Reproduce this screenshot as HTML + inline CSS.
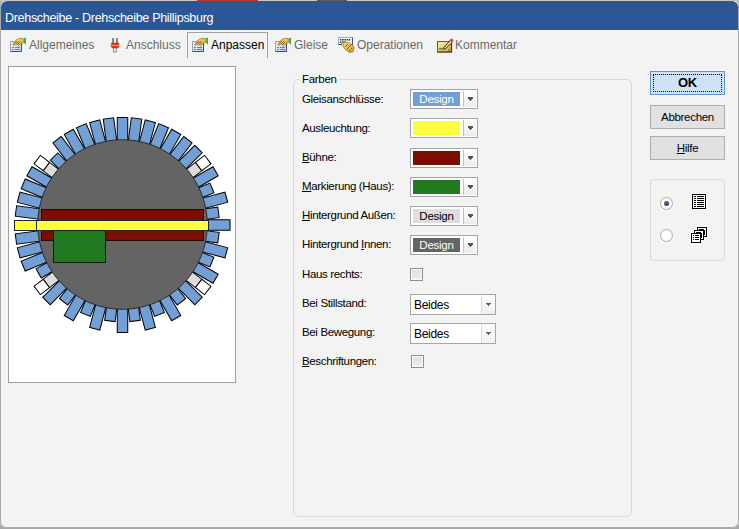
<!DOCTYPE html>
<html><head><meta charset="utf-8">
<style>
html,body{margin:0;padding:0;}
body{width:739px;height:529px;overflow:hidden;position:relative;background:#a8a8a8;font-family:"Liberation Sans",sans-serif;}
.abs{position:absolute;}
#win{position:absolute;left:0;top:0;width:739px;height:528px;background:#f3f3f3;border-radius:6px;}
#frame{position:absolute;left:0;top:0;width:737px;height:527px;border:1px solid #a9a9a9;border-top:none;border-radius:6px;pointer-events:none;}
#title{position:absolute;left:1px;top:1px;width:737px;height:29px;background:#2b5797;border-radius:6px 6px 0 0;}
#title span{position:absolute;left:4px;top:10px;font-size:12.5px;letter-spacing:-0.3px;color:#fff;white-space:nowrap;line-height:14px;}
.tab{position:absolute;top:0;height:24px;font-size:12px;color:#6a6a6a;white-space:nowrap;}
.lbl{position:absolute;left:302px;font-size:11.5px;letter-spacing:-0.35px;color:#000;white-space:nowrap;}
.dd{position:absolute;left:410px;width:66px;height:18px;border:1px solid #a3a4a9;background:#fff;}
.dd .sw{position:absolute;left:2px;top:2px;width:47px;height:14px;}
.dd .sep{position:absolute;left:52px;top:1px;width:1px;height:16px;background:#bfc3c9;}
.dd .arr{position:absolute;left:53px;top:1px;width:12px;height:16px;background:linear-gradient(#fff,#ececec);}
.dd .arr:after{content:"";position:absolute;left:4px;top:6px;width:5px;height:4px;background:linear-gradient(#555,#555) 0 0/5px 2px no-repeat,linear-gradient(#555,#555) 1px 2px/3px 1px no-repeat,linear-gradient(#555,#555) 2px 3px/1px 1px no-repeat;}
.sw span{position:absolute;left:0;right:0;top:1px;text-align:center;font-size:11.5px;letter-spacing:-0.25px;}
.cb{position:absolute;left:410px;width:11px;height:11px;border:1px solid #8e8e8e;background:linear-gradient(#dedede,#eeeeee);box-shadow:inset 0 0 0 1px #fafafa;}
.combo{position:absolute;left:410px;width:84px;height:19px;border:1px solid #a5a5a5;background:#fff;}
.combo span{position:absolute;left:3px;top:3px;font-size:12px;letter-spacing:-0.3px;color:#000;}
.combo .sep{position:absolute;left:70px;top:0;width:1px;height:19px;background:#dcdcdc;}
.combo .arr{position:absolute;left:71px;top:0;width:13px;height:19px;background:linear-gradient(#fff,#f0f0f0);}
.combo .arr:after{content:"";position:absolute;left:4px;top:8px;width:5px;height:3px;background:linear-gradient(#606060,#606060) 0 0/5px 1px no-repeat,linear-gradient(#606060,#606060) 1px 1px/3px 1px no-repeat,linear-gradient(#606060,#606060) 2px 2px/1px 1px no-repeat;}
.btn{position:absolute;left:650px;width:73px;height:22px;border:1px solid #adadad;background:#e1e1e1;font-size:11.5px;letter-spacing:-0.3px;text-align:center;line-height:22px;color:#000;}
u{text-decoration:underline;}
</style></head><body>

<svg width="0" height="0" style="position:absolute">
<defs>
<linearGradient id="cardg" x1="0" y1="0" x2="1" y2="1"><stop offset="0" stop-color="#f4f8fd"/><stop offset="1" stop-color="#bcd0ea"/></linearGradient>
<linearGradient id="goldg" x1="0" y1="0" x2="1" y2="1"><stop offset="0" stop-color="#fbe58a"/><stop offset="1" stop-color="#d49a1c"/></linearGradient>
<linearGradient id="padg" x1="0" y1="0" x2="1" y2="1"><stop offset="0" stop-color="#fff6a8"/><stop offset="1" stop-color="#c9a23a"/></linearGradient>
</defs></svg>
<div id="win">
 <div id="title"><span>Drehscheibe - Drehscheibe Phillipsburg</span></div>

 <!-- tabs -->
 <div class="abs" style="left:187px;top:32px;width:79px;height:25px;border:1px solid #a0a0a0;border-bottom:none;background:#f3f3f3;"></div>
 <div class="tab" style="left:29px;top:38px;">Allgemeines</div>
 <div class="tab" style="left:126px;top:38px;">Anschluss</div>
 <div class="tab" style="left:211px;top:38px;color:#000;">Anpassen</div>
 <div class="tab" style="left:294px;top:38px;">Gleise</div>
 <div class="tab" style="left:357px;top:38px;">Operationen</div>
 <div class="tab" style="left:455px;top:38px;">Kommentar</div>


 <svg class="abs" style="left:8px;top:34px" width="20" height="20" viewBox="0 0 20 20">
 <rect x="2.5" y="7.5" width="11" height="10" fill="url(#cardg)" stroke="#8ea3c2"/>
 <path d="M2.5 17.5 H13.5 V7.5" fill="none" stroke="#3d4f70"/>
 <rect x="4" y="13" width="2" height="1" fill="#6f7f99"/><rect x="7" y="13" width="5" height="1" fill="#6f7f99"/>
 <rect x="4" y="15" width="2" height="1" fill="#6f7f99"/><rect x="7" y="15" width="5" height="1" fill="#6f7f99"/>
 <path d="M4.5 10.5 L8 6 L11 4.5 L15 4.3 L16.3 6.5 L15 9 L12.5 10 L10.5 11.8 L8.5 10 L6 11.5 Z" fill="url(#goldg)" stroke="#8c6a1e" stroke-width="0.6"/>
 <g fill="#7a5a14" opacity="0.75"><rect x="6" y="9" width="1" height="1"/><rect x="8" y="7" width="1" height="1"/><rect x="8" y="9" width="1" height="1"/><rect x="10" y="7" width="1" height="1"/><rect x="10" y="9" width="1" height="1"/><rect x="9" y="8" width="1" height="1"/><rect x="7" y="8" width="1" height="1"/><rect x="11" y="8" width="1" height="1"/><rect x="9" y="10" width="1" height="1"/></g>
 <path d="M15.8 4 L18 3.8 L18 11 L16 8.5 Z" fill="#55a455"/>
</svg>
 <svg class="abs" style="left:104px;top:34px" width="20" height="20" viewBox="0 0 20 20">
 <rect x="8.3" y="4" width="1.6" height="5" fill="#6b6b6b"/><rect x="12.1" y="4" width="1.6" height="5" fill="#6b6b6b"/>
 <path d="M7.3 9 H14.8 V13 L13.5 14 H8.5 L7.3 13 Z" fill="#ee3a0c" stroke="#a02808" stroke-width="0.5"/>
 <rect x="7.5" y="11" width="7" height="0.8" fill="#ffb090"/>
 <rect x="9.5" y="14" width="3" height="4" fill="#d8eef6" stroke="#555" stroke-width="0.6"/>
</svg>
 <svg class="abs" style="left:190px;top:34px" width="20" height="20" viewBox="0 0 20 20">
 <rect x="2.5" y="7.5" width="11" height="10" fill="url(#cardg)" stroke="#8ea3c2"/>
 <path d="M2.5 17.5 H13.5 V7.5" fill="none" stroke="#3d4f70"/>
 <rect x="4" y="13" width="2" height="1" fill="#6f7f99"/><rect x="7" y="13" width="5" height="1" fill="#6f7f99"/>
 <rect x="4" y="15" width="2" height="1" fill="#6f7f99"/><rect x="7" y="15" width="5" height="1" fill="#6f7f99"/>
 <path d="M4.5 10.5 L8 6 L11 4.5 L15 4.3 L16.3 6.5 L15 9 L12.5 10 L10.5 11.8 L8.5 10 L6 11.5 Z" fill="url(#goldg)" stroke="#8c6a1e" stroke-width="0.6"/>
 <g fill="#7a5a14" opacity="0.75"><rect x="6" y="9" width="1" height="1"/><rect x="8" y="7" width="1" height="1"/><rect x="8" y="9" width="1" height="1"/><rect x="10" y="7" width="1" height="1"/><rect x="10" y="9" width="1" height="1"/><rect x="9" y="8" width="1" height="1"/><rect x="7" y="8" width="1" height="1"/><rect x="11" y="8" width="1" height="1"/><rect x="9" y="10" width="1" height="1"/></g>
 <path d="M15.8 4 L18 3.8 L18 11 L16 8.5 Z" fill="#55a455"/>
</svg>
 <svg class="abs" style="left:273px;top:34px" width="20" height="20" viewBox="0 0 20 20">
 <rect x="2.5" y="7.5" width="11" height="10" fill="url(#cardg)" stroke="#8ea3c2"/>
 <path d="M2.5 17.5 H13.5 V7.5" fill="none" stroke="#3d4f70"/>
 <rect x="4" y="13" width="2" height="1" fill="#6f7f99"/><rect x="7" y="13" width="5" height="1" fill="#6f7f99"/>
 <rect x="4" y="15" width="2" height="1" fill="#6f7f99"/><rect x="7" y="15" width="5" height="1" fill="#6f7f99"/>
 <path d="M4.5 10.5 L8 6 L11 4.5 L15 4.3 L16.3 6.5 L15 9 L12.5 10 L10.5 11.8 L8.5 10 L6 11.5 Z" fill="url(#goldg)" stroke="#8c6a1e" stroke-width="0.6"/>
 <g fill="#7a5a14" opacity="0.75"><rect x="6" y="9" width="1" height="1"/><rect x="8" y="7" width="1" height="1"/><rect x="8" y="9" width="1" height="1"/><rect x="10" y="7" width="1" height="1"/><rect x="10" y="9" width="1" height="1"/><rect x="9" y="8" width="1" height="1"/><rect x="7" y="8" width="1" height="1"/><rect x="11" y="8" width="1" height="1"/><rect x="9" y="10" width="1" height="1"/></g>
 <path d="M15.8 4 L18 3.8 L18 11 L16 8.5 Z" fill="#55a455"/>
</svg>
 <svg class="abs" style="left:335px;top:33px" width="20" height="20" viewBox="0 0 20 20">
 <rect x="3.5" y="4.5" width="14" height="7" fill="#f6f9fd" stroke="#95a7c2"/>
 <path d="M3.5 11.5 H17.5 V4.5" fill="none" stroke="#3f5272"/>
 <g fill="#26385a"><rect x="5" y="6" width="1.5" height="1.5"/><rect x="7.2" y="6" width="1.5" height="1.5"/><rect x="9.4" y="6" width="1.5" height="1.5"/><rect x="11.6" y="6" width="1.5" height="1.5"/><rect x="13.8" y="6" width="1.5" height="1.5"/><rect x="5" y="8.4" width="1.5" height="1.5"/><rect x="7.2" y="8.4" width="1.5" height="1.5"/><rect x="9.4" y="8.4" width="1.5" height="1.5"/></g>
 <path d="M7 9.8 L10.5 9.2 L13.5 9.8 L17.5 11.8 L19 15 L17.8 19 L14 19.2 L11 16.8 L8.2 14 L6.3 11.2 Z" fill="url(#goldg)" stroke="#6d5212" stroke-width="0.6"/>
 <g fill="#6d5212" opacity="0.8"><rect x="8" y="11" width="1" height="1"/><rect x="10" y="13" width="1" height="1"/><rect x="12" y="15" width="1" height="1"/><rect x="12" y="11" width="1" height="1"/><rect x="14" y="13" width="1" height="1"/><rect x="16" y="15" width="1" height="1"/><rect x="14" y="17" width="1" height="1"/><rect x="11" y="12" width="1" height="1"/><rect x="13" y="14" width="1" height="1"/><rect x="15" y="12" width="1" height="1"/></g>
</svg>
 <svg class="abs" style="left:434px;top:33px" width="20" height="20" viewBox="0 0 20 20">
 <rect x="3.5" y="8.5" width="14" height="10.5" fill="url(#padg)" stroke="#6e5a2a"/>
 <path d="M3.5 19 H17.5 V8.5" fill="none" stroke="#4a3a16" stroke-width="1.2"/>
 <path d="M9.5 15 L16.5 7 L18.5 9 L11 16 Z" fill="#f4e08a" stroke="#111" stroke-width="0.8"/>
 <path d="M9.5 15 L11 16 L9 16.5 Z" fill="#fff" stroke="#333" stroke-width="0.4"/>
 <circle cx="17.6" cy="7.3" r="1.8" fill="#cf5a3c"/>
 <rect x="5" y="15.4" width="4.5" height="1" fill="#444"/>
 <circle cx="15" cy="17" r="1" fill="#8a7a3a"/>
</svg>
 <!-- preview panel -->
 <div class="abs" style="left:8px;top:66px;width:226px;height:315px;border:1px solid #a0a0a0;background:#fff;overflow:hidden;">
  <div class="abs" style="left:-9px;top:-67px;"><svg width="739" height="529" viewBox="0 0 739 529" style="position:absolute;left:0;top:0">
<rect transform="translate(122.5 225.0) rotate(0.0)" x="78" y="-5.25" width="29.5" height="10.5" fill="#729fd6" stroke="#000" stroke-width="1"/>
<rect transform="translate(122.5 225.0) rotate(-7.5)" x="78" y="-5.25" width="18.799999999999997" height="10.5" fill="#729fd6" stroke="#000" stroke-width="1"/>
<rect transform="translate(122.5 225.0) rotate(-15.0)" x="78" y="-5.25" width="29.5" height="10.5" fill="#729fd6" stroke="#000" stroke-width="1"/>
<rect transform="translate(122.5 225.0) rotate(-22.5)" x="78" y="-5.25" width="18.799999999999997" height="10.5" fill="#729fd6" stroke="#000" stroke-width="1"/>
<rect transform="translate(122.5 225.0) rotate(-30.0)" x="78" y="-5.25" width="29.5" height="10.5" fill="#729fd6" stroke="#000" stroke-width="1"/>
<rect transform="translate(122.5 225.0) rotate(-37.5)" x="78" y="-5.25" width="18.0" height="10.5" fill="#dcdcdc" stroke="#000" stroke-width="1"/>
<rect transform="translate(122.5 225.0) rotate(-37.5)" x="96.0" y="-5.25" width="11.5" height="10.5" fill="#ffffff" stroke="#000" stroke-width="1"/>
<rect transform="translate(122.5 225.0) rotate(-45.0)" x="78" y="-5.25" width="29.5" height="10.5" fill="#729fd6" stroke="#000" stroke-width="1"/>
<rect transform="translate(122.5 225.0) rotate(-52.5)" x="78" y="-5.25" width="29.5" height="10.5" fill="#729fd6" stroke="#000" stroke-width="1"/>
<rect transform="translate(122.5 225.0) rotate(-60.0)" x="78" y="-5.25" width="29.5" height="10.5" fill="#729fd6" stroke="#000" stroke-width="1"/>
<rect transform="translate(122.5 225.0) rotate(-67.5)" x="78" y="-5.25" width="29.5" height="10.5" fill="#729fd6" stroke="#000" stroke-width="1"/>
<rect transform="translate(122.5 225.0) rotate(-75.0)" x="78" y="-5.25" width="29.5" height="10.5" fill="#729fd6" stroke="#000" stroke-width="1"/>
<rect transform="translate(122.5 225.0) rotate(-82.5)" x="78" y="-5.25" width="29.5" height="10.5" fill="#729fd6" stroke="#000" stroke-width="1"/>
<rect transform="translate(122.5 225.0) rotate(-90.0)" x="78" y="-5.25" width="29.5" height="10.5" fill="#729fd6" stroke="#000" stroke-width="1"/>
<rect transform="translate(122.5 225.0) rotate(-97.5)" x="78" y="-5.25" width="29.5" height="10.5" fill="#729fd6" stroke="#000" stroke-width="1"/>
<rect transform="translate(122.5 225.0) rotate(-105.0)" x="78" y="-5.25" width="29.5" height="10.5" fill="#729fd6" stroke="#000" stroke-width="1"/>
<rect transform="translate(122.5 225.0) rotate(-112.5)" x="78" y="-5.25" width="29.5" height="10.5" fill="#729fd6" stroke="#000" stroke-width="1"/>
<rect transform="translate(122.5 225.0) rotate(-120.0)" x="78" y="-5.25" width="29.5" height="10.5" fill="#729fd6" stroke="#000" stroke-width="1"/>
<rect transform="translate(122.5 225.0) rotate(-127.5)" x="78" y="-5.25" width="29.5" height="10.5" fill="#729fd6" stroke="#000" stroke-width="1"/>
<rect transform="translate(122.5 225.0) rotate(-135.0)" x="78" y="-5.25" width="18.799999999999997" height="10.5" fill="#729fd6" stroke="#000" stroke-width="1"/>
<rect transform="translate(122.5 225.0) rotate(-142.5)" x="78" y="-5.25" width="18.0" height="10.5" fill="#dcdcdc" stroke="#000" stroke-width="1"/>
<rect transform="translate(122.5 225.0) rotate(-142.5)" x="96.0" y="-5.25" width="11.5" height="10.5" fill="#ffffff" stroke="#000" stroke-width="1"/>
<rect transform="translate(122.5 225.0) rotate(-150.0)" x="78" y="-5.25" width="29.5" height="10.5" fill="#729fd6" stroke="#000" stroke-width="1"/>
<rect transform="translate(122.5 225.0) rotate(-157.5)" x="78" y="-5.25" width="29.5" height="10.5" fill="#729fd6" stroke="#000" stroke-width="1"/>
<rect transform="translate(122.5 225.0) rotate(-165.0)" x="78" y="-5.25" width="29.5" height="10.5" fill="#729fd6" stroke="#000" stroke-width="1"/>
<rect transform="translate(122.5 225.0) rotate(-172.5)" x="78" y="-5.25" width="29.5" height="10.5" fill="#729fd6" stroke="#000" stroke-width="1"/>
<rect transform="translate(122.5 225.0) rotate(-187.5)" x="78" y="-5.25" width="29.5" height="10.5" fill="#729fd6" stroke="#000" stroke-width="1"/>
<rect transform="translate(122.5 225.0) rotate(-195.0)" x="78" y="-5.25" width="29.5" height="10.5" fill="#729fd6" stroke="#000" stroke-width="1"/>
<rect transform="translate(122.5 225.0) rotate(-202.5)" x="78" y="-5.25" width="29.5" height="10.5" fill="#729fd6" stroke="#000" stroke-width="1"/>
<rect transform="translate(122.5 225.0) rotate(-210.0)" x="78" y="-5.25" width="18.799999999999997" height="10.5" fill="#729fd6" stroke="#000" stroke-width="1"/>
<rect transform="translate(122.5 225.0) rotate(-217.5)" x="78" y="-5.25" width="18.0" height="10.5" fill="#dcdcdc" stroke="#000" stroke-width="1"/>
<rect transform="translate(122.5 225.0) rotate(-217.5)" x="96.0" y="-5.25" width="11.5" height="10.5" fill="#ffffff" stroke="#000" stroke-width="1"/>
<rect transform="translate(122.5 225.0) rotate(-225.0)" x="78" y="-5.25" width="29.5" height="10.5" fill="#729fd6" stroke="#000" stroke-width="1"/>
<rect transform="translate(122.5 225.0) rotate(-232.5)" x="78" y="-5.25" width="18.799999999999997" height="10.5" fill="#729fd6" stroke="#000" stroke-width="1"/>
<rect transform="translate(122.5 225.0) rotate(-240.0)" x="78" y="-5.25" width="29.5" height="10.5" fill="#729fd6" stroke="#000" stroke-width="1"/>
<rect transform="translate(122.5 225.0) rotate(-247.5)" x="78" y="-5.25" width="18.799999999999997" height="10.5" fill="#729fd6" stroke="#000" stroke-width="1"/>
<rect transform="translate(122.5 225.0) rotate(-255.0)" x="78" y="-5.25" width="29.5" height="10.5" fill="#729fd6" stroke="#000" stroke-width="1"/>
<rect transform="translate(122.5 225.0) rotate(-262.5)" x="78" y="-5.25" width="18.799999999999997" height="10.5" fill="#729fd6" stroke="#000" stroke-width="1"/>
<rect transform="translate(122.5 225.0) rotate(-270.0)" x="78" y="-5.25" width="29.5" height="10.5" fill="#729fd6" stroke="#000" stroke-width="1"/>
<rect transform="translate(122.5 225.0) rotate(-277.5)" x="78" y="-5.25" width="18.799999999999997" height="10.5" fill="#729fd6" stroke="#000" stroke-width="1"/>
<rect transform="translate(122.5 225.0) rotate(-285.0)" x="78" y="-5.25" width="29.5" height="10.5" fill="#729fd6" stroke="#000" stroke-width="1"/>
<rect transform="translate(122.5 225.0) rotate(-292.5)" x="78" y="-5.25" width="18.799999999999997" height="10.5" fill="#729fd6" stroke="#000" stroke-width="1"/>
<rect transform="translate(122.5 225.0) rotate(-300.0)" x="78" y="-5.25" width="29.5" height="10.5" fill="#729fd6" stroke="#000" stroke-width="1"/>
<rect transform="translate(122.5 225.0) rotate(-307.5)" x="78" y="-5.25" width="18.799999999999997" height="10.5" fill="#729fd6" stroke="#000" stroke-width="1"/>
<rect transform="translate(122.5 225.0) rotate(-315.0)" x="78" y="-5.25" width="29.5" height="10.5" fill="#729fd6" stroke="#000" stroke-width="1"/>
<rect transform="translate(122.5 225.0) rotate(-322.5)" x="78" y="-5.25" width="18.0" height="10.5" fill="#dcdcdc" stroke="#000" stroke-width="1"/>
<rect transform="translate(122.5 225.0) rotate(-322.5)" x="96.0" y="-5.25" width="11.5" height="10.5" fill="#ffffff" stroke="#000" stroke-width="1"/>
<rect transform="translate(122.5 225.0) rotate(-330.0)" x="78" y="-5.25" width="29.5" height="10.5" fill="#729fd6" stroke="#000" stroke-width="1"/>
<rect transform="translate(122.5 225.0) rotate(-337.5)" x="78" y="-5.25" width="18.799999999999997" height="10.5" fill="#729fd6" stroke="#000" stroke-width="1"/>
<rect transform="translate(122.5 225.0) rotate(-345.0)" x="78" y="-5.25" width="29.5" height="10.5" fill="#729fd6" stroke="#000" stroke-width="1"/>
<rect transform="translate(122.5 225.0) rotate(-352.5)" x="78" y="-5.25" width="18.799999999999997" height="10.5" fill="#729fd6" stroke="#000" stroke-width="1"/>
<circle cx="122.5" cy="224.5" r="84.8" fill="#646464" stroke="#2a2a2a" stroke-width="1"/>
<rect x="41.5" y="209.5" width="162" height="31" fill="#7a0c00" stroke="#2a0800" stroke-width="1"/>
<rect x="14.5" y="220.5" width="194" height="10" fill="#ffff40" stroke="#222" stroke-width="1"/>
<line x1="36.5" y1="220.5" x2="36.5" y2="230.5" stroke="#222" stroke-width="1"/>
<rect x="53.5" y="230.5" width="52" height="32" fill="#217a21" stroke="#0a200a" stroke-width="1"/>
</svg></div>
 </div>

 <!-- group box -->
 <div class="abs" style="left:293px;top:79px;width:337px;height:436px;border:1px solid #d9d9d9;border-radius:5px;"></div>
 <div class="abs" style="left:300px;top:73px;padding:0 2px;background:#f3f3f3;font-size:11.5px;letter-spacing:-0.3px;">Farben</div>

 <div class="lbl" style="top:93px;">Gleisanschlüsse:</div>
 <div class="lbl" style="top:122px;">Ausleuchtung:</div>
 <div class="lbl" style="top:151px;"><u>B</u>ühne:</div>
 <div class="lbl" style="top:180px;"><u>M</u>arkierung (Haus):</div>
 <div class="lbl" style="top:209px;"><u>H</u>intergrund Außen:</div>
 <div class="lbl" style="top:238px;">Hintergrund <u>I</u>nnen:</div>
 <div class="lbl" style="top:268px;">Haus rechts:</div>
 <div class="lbl" style="top:297px;">Bei Stillstand:</div>
 <div class="lbl" style="top:326px;">Bei Bewegung:</div>
 <div class="lbl" style="top:355px;"><u>B</u>eschriftungen:</div>

 <div class="dd" style="top:89px;"><div class="sw" style="background:#729fd6;"><span style="color:#fff">Design</span></div><div class="sep"></div><div class="arr"></div></div>
 <div class="dd" style="top:118px;"><div class="sw" style="background:#ffff40;"></div><div class="sep"></div><div class="arr"></div></div>
 <div class="dd" style="top:148px;"><div class="sw" style="background:#7a0c00;"></div><div class="sep"></div><div class="arr"></div></div>
 <div class="dd" style="top:177px;"><div class="sw" style="background:#217a21;"></div><div class="sep"></div><div class="arr"></div></div>
 <div class="dd" style="top:206px;"><div class="sw" style="background:#dedede;"><span style="color:#000">Design</span></div><div class="sep"></div><div class="arr"></div></div>
 <div class="dd" style="top:235px;"><div class="sw" style="background:#646464;"><span style="color:#fff">Design</span></div><div class="sep"></div><div class="arr"></div></div>

 <div class="cb" style="top:268px;"></div>
 <div class="combo" style="top:294px;"><span>Beides</span><div class="sep"></div><div class="arr"></div></div>
 <div class="combo" style="top:323px;"><span>Beides</span><div class="sep"></div><div class="arr"></div></div>
 <div class="cb" style="top:355px;left:411px;"></div>

 <!-- buttons -->
 <div class="btn" style="top:71px;border-color:#5b96dd;background:#cde2f6;font-weight:bold;font-size:13px;">OK</div>
 <div class="abs" style="left:653px;top:74px;width:67px;height:16px;border:1px dotted #000;"></div>
 <div class="btn" style="top:105px;">Abbrechen</div>
 <div class="btn" style="top:136px;"><u>H</u>ilfe</div>

 <div class="abs" style="left:650px;top:179px;width:73px;height:80px;border:1px solid #dcdcdc;border-radius:4px;"></div>

 <div class="abs" style="left:660px;top:197px;width:11px;height:11px;border:1px solid #c8a890;border-radius:50%;background:radial-gradient(#fff 40%,#f3ece4);"></div>
 <div class="abs" style="left:664px;top:201px;width:5px;height:5px;border-radius:50%;background:radial-gradient(circle at 40% 35%,#5a76a8,#14264a);"></div>
 <div class="abs" style="left:660px;top:229px;width:11px;height:11px;border:1px solid #c8a890;border-radius:50%;background:radial-gradient(#fff 40%,#f3ece4);"></div>

 <svg class="abs" style="left:680px;top:180px" width="40" height="70" viewBox="680 180 40 70" shape-rendering="crispEdges">
  <rect x="691" y="193" width="16" height="17" fill="#fff"/>
  <rect x="692.5" y="194.5" width="13" height="14" fill="#fff" stroke="#000" stroke-width="1.4"/>
  <g fill="#000"><rect x="694" y="196" width="2" height="1"/><rect x="697" y="196" width="7" height="1"/><rect x="694" y="198" width="2" height="1"/><rect x="697" y="198" width="7" height="1"/><rect x="694" y="200" width="2" height="1"/><rect x="697" y="200" width="7" height="1"/><rect x="694" y="202" width="2" height="1"/><rect x="697" y="202" width="7" height="1"/><rect x="694" y="204" width="2" height="1"/><rect x="697" y="204" width="7" height="1"/><rect x="694" y="206" width="2" height="1"/><rect x="697" y="206" width="7" height="1"/></g>
  <path d="M696 226 H708 V238 H705 V241 H702 V244 H690 V232 H693 V229 H696 Z" fill="#fff"/>
  <rect x="697.5" y="227.5" width="9" height="9" fill="#fff" stroke="#000" stroke-width="1.4"/>
  <rect x="699" y="229" width="5" height="1" fill="#000"/><rect x="704" y="230" width="1" height="5" fill="#000"/>
  <rect x="694.5" y="230.5" width="9" height="9" fill="#fff" stroke="#000" stroke-width="1.4"/>
  <rect x="696" y="232" width="5" height="1" fill="#000"/><rect x="701" y="233" width="1" height="5" fill="#000"/>
  <rect x="691.5" y="233.5" width="9" height="9" fill="#fff" stroke="#000" stroke-width="1.4"/>
  <g fill="#000"><rect x="693" y="235" width="1" height="1"/><rect x="695" y="235" width="4" height="1"/><rect x="693" y="237" width="1" height="1"/><rect x="695" y="237" width="4" height="1"/><rect x="693" y="239" width="1" height="1"/><rect x="695" y="239" width="4" height="1"/></g>
 </svg>
</div>
<div class="abs" style="left:0;top:0;width:739px;height:1px;background:#cdc9c0"></div>
<div class="abs" style="left:197px;top:0;width:61px;height:1px;background:#c0392b"></div>
<div class="abs" style="left:317px;top:0;width:30px;height:1px;background:#5c5c5c"></div>
<div id="frame"></div>
</body></html>
